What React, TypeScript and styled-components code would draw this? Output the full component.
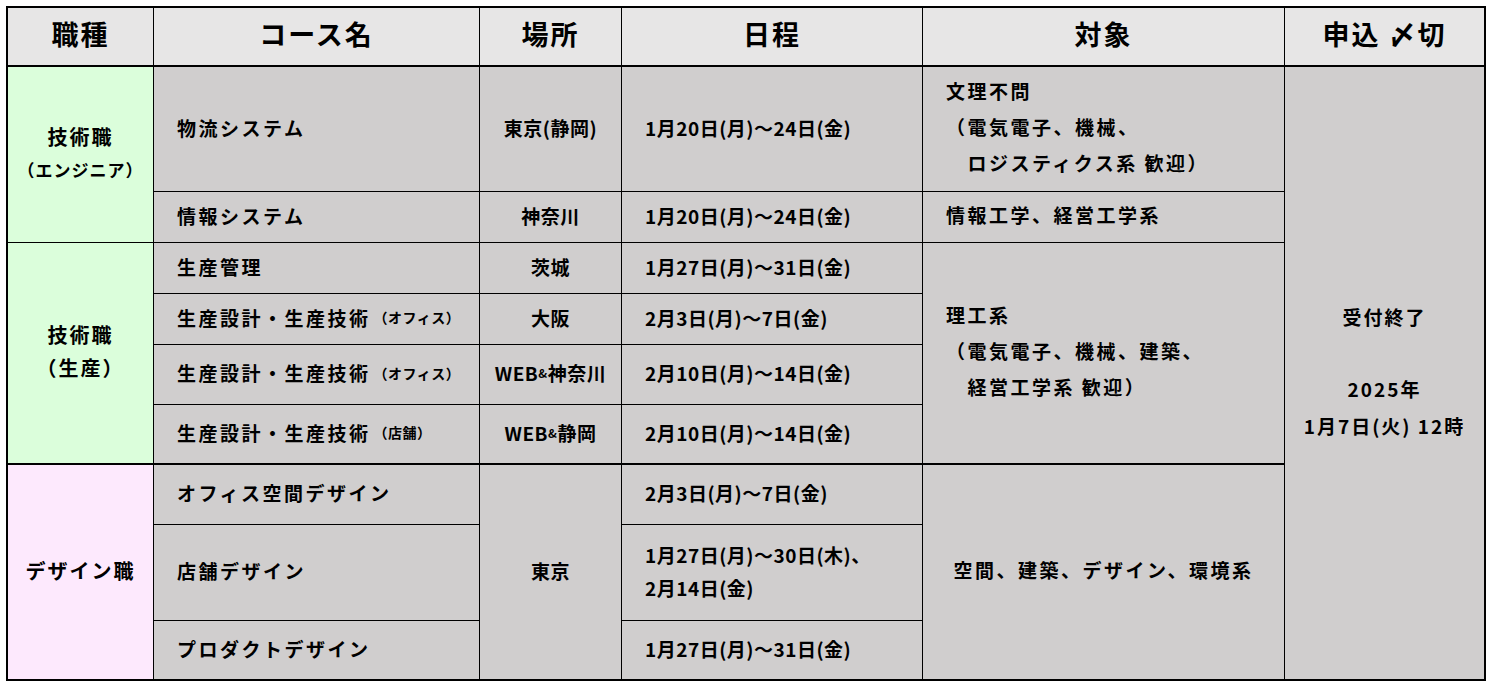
import React from 'react';
import styled, { createGlobalStyle, css } from 'styled-components';

type Edge = 'thin' | 'thick' | 'none';

interface CellProps {
  $rows?: number;
  $edge?: Edge;
  $last?: boolean;
}

const GlobalStyle = createGlobalStyle`
  html, body {
    margin: 0;
    padding: 0;
    background: #fff;
  }
  body {
    font-family: 'Noto Sans CJK JP', 'Noto Sans', sans-serif;
    color: #000;
  }
`;

const Page = styled.div`
  padding: 6px;
`;

const Sheet = styled.div`
  display: grid;
  grid-template-columns: 146px 326px 142px 301px 362px 199px;
  grid-template-rows: 59px 125px 51px 51px 51px 60px 60px 60px 96px 58px;
  width: 1476px;
  border: 2px solid #000;
`;

const Cell = styled.div<CellProps>`
  box-sizing: border-box;
  display: flex;
  align-items: center;
  grid-row: span ${(p) => p.$rows ?? 1};
  padding-bottom: 4px;
  border-right: ${(p) => (p.$last ? 'none' : '1px solid #000')};
  border-bottom: ${(p) =>
    p.$edge === 'none' ? 'none' : p.$edge === 'thick' ? '2px solid #000' : '1px solid #000'};
  background: #d0cece;
  font-weight: 700;
  font-size: 19px;
  white-space: nowrap;
`;

const HeadCell = styled(Cell)`
  justify-content: center;
  padding-bottom: 6px;
  background: #e7e6e6;
  font-size: 27px;
  letter-spacing: 2px;
  border-bottom: 2px solid #000;
`;

const JobCell = styled(Cell)<{ $tone: 'green' | 'pink' }>`
  flex-direction: column;
  justify-content: center;
  text-align: center;
  line-height: 33px;
  ${(p) =>
    p.$tone === 'green'
      ? css`
          background: #dbfedb;
        `
      : css`
          background: #fde9fd;
        `}
`;

const JobSub = styled.span<{ $small?: boolean }>`
  font-size: ${(p) => (p.$small ? '17px' : '20px')};
  letter-spacing: ${(p) => (p.$small ? '1px' : '2px')};
`;

const CourseCell = styled(Cell)`
  padding-left: 23px;
  letter-spacing: 2.5px;
`;

const Note = styled.span`
  font-size: 14px;
  letter-spacing: 0.5px;
  margin-left: 3px;
`;

const PlaceCell = styled(Cell)`
  justify-content: center;
  letter-spacing: 0.5px;
`;

const Amp = styled.span`
  font-size: 12px;
`;

const DateCell = styled(Cell)`
  padding-left: 23px;
  line-height: 33px;
  letter-spacing: 0.5px;
`;

const TargetCell = styled(Cell)<{ $center?: boolean }>`
  padding-left: ${(p) => (p.$center ? '0' : '23px')};
  justify-content: ${(p) => (p.$center ? 'center' : 'flex-start')};
  line-height: 36px;
  letter-spacing: 2.5px;
`;

const DeadlineCell = styled(Cell)`
  flex-direction: column;
  justify-content: center;
  text-align: center;
  line-height: 37px;
  letter-spacing: 2px;
`;

const Gap = styled.span`
  display: block;
  height: 35px;
`;

const Lines = styled.div``;

export default function App() {
  return (
    <Page>
      <GlobalStyle />
      <Sheet>
        <HeadCell>職種</HeadCell>
        <HeadCell>コース名</HeadCell>
        <HeadCell>場所</HeadCell>
        <HeadCell>日程</HeadCell>
        <HeadCell>対象</HeadCell>
        <HeadCell $last>申込 〆切</HeadCell>

        <JobCell $tone='green' $rows={2}>
          <JobSub>技術職</JobSub>
          <JobSub $small>（エンジニア）</JobSub>
        </JobCell>
        <CourseCell>物流システム</CourseCell>
        <PlaceCell>東京(静岡)</PlaceCell>
        <DateCell>1月20日(月)～24日(金)</DateCell>
        <TargetCell>
          <Lines>
            文理不問
            <br />
            （電気電子、機械、
            <br />
            &emsp;ロジスティクス系 歓迎）
          </Lines>
        </TargetCell>
        <DeadlineCell $rows={9} $last $edge='none'>
          <div>受付終了</div>
          <Gap />
          <div>2025年</div>
          <div>1月7日(火) 12時</div>
        </DeadlineCell>

        <CourseCell>情報システム</CourseCell>
        <PlaceCell>神奈川</PlaceCell>
        <DateCell>1月20日(月)～24日(金)</DateCell>
        <TargetCell>情報工学、経営工学系</TargetCell>

        <JobCell $tone='green' $rows={4} $edge='thick'>
          <JobSub>技術職</JobSub>
          <JobSub>（生産）</JobSub>
        </JobCell>
        <CourseCell>生産管理</CourseCell>
        <PlaceCell>茨城</PlaceCell>
        <DateCell>1月27日(月)～31日(金)</DateCell>
        <TargetCell $rows={4} $edge='thick'>
          <Lines>
            理工系
            <br />
            （電気電子、機械、建築、
            <br />
            &emsp;経営工学系 歓迎）
          </Lines>
        </TargetCell>

        <CourseCell>
          生産設計・生産技術<Note>（オフィス）</Note>
        </CourseCell>
        <PlaceCell>大阪</PlaceCell>
        <DateCell>2月3日(月)～7日(金)</DateCell>

        <CourseCell>
          生産設計・生産技術<Note>（オフィス）</Note>
        </CourseCell>
        <PlaceCell>
          WEB<Amp>&amp;</Amp>神奈川
        </PlaceCell>
        <DateCell>2月10日(月)～14日(金)</DateCell>

        <CourseCell $edge='thick'>
          生産設計・生産技術<Note>（店舗）</Note>
        </CourseCell>
        <PlaceCell $edge='thick'>
          WEB<Amp>&amp;</Amp>静岡
        </PlaceCell>
        <DateCell $edge='thick'>2月10日(月)～14日(金)</DateCell>

        <JobCell $tone='pink' $rows={3} $edge='none'>
          <JobSub>デザイン職</JobSub>
        </JobCell>
        <CourseCell>オフィス空間デザイン</CourseCell>
        <PlaceCell $rows={3} $edge='none'>東京</PlaceCell>
        <DateCell>2月3日(月)～7日(金)</DateCell>
        <TargetCell $rows={3} $edge='none' $center>
          空間、建築、デザイン、環境系
        </TargetCell>

        <CourseCell>店舗デザイン</CourseCell>
        <DateCell>
          <Lines>
            1月27日(月)～30日(木)、
            <br />
            2月14日(金)
          </Lines>
        </DateCell>

        <CourseCell $edge='none'>プロダクトデザイン</CourseCell>
        <DateCell $edge='none'>1月27日(月)～31日(金)</DateCell>
      </Sheet>
    </Page>
  );
}
